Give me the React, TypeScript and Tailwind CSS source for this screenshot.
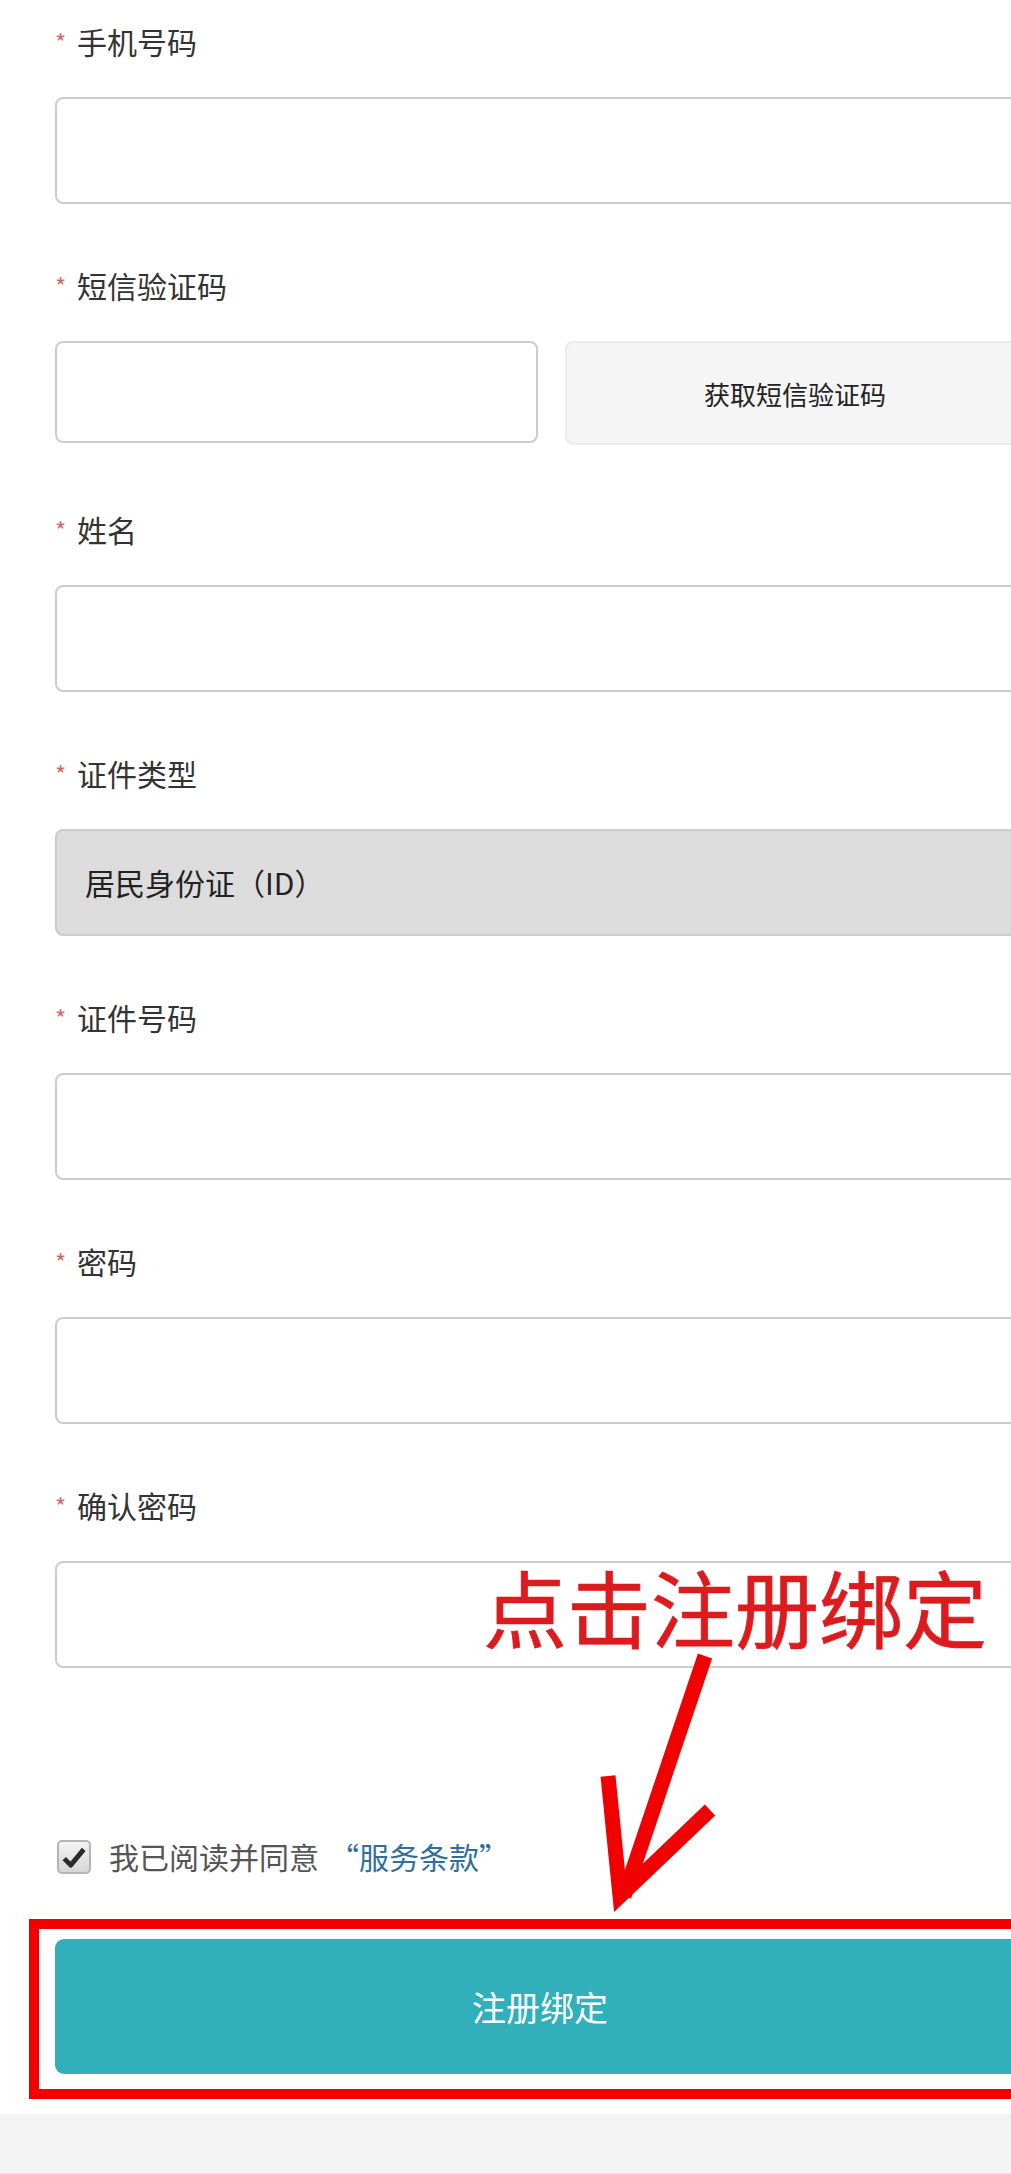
const fields = [
  { label: '手机号码', kind: 'input' },
  { label: '短信验证码', kind: 'sms' },
  { label: '姓名', kind: 'input' },
  { label: '证件类型', kind: 'select' },
  { label: '证件号码', kind: 'input' },
  { label: '密码', kind: 'input' },
  { label: '确认密码', kind: 'input' },
];

function Field({ label, kind }: { label: string; kind: string }) {
  return (
    <div className="mb-[59px] last:mb-0">
      <div className="flex h-[45px] items-center text-[30px] leading-[45px] text-[#333]">
        <span className="w-[22px] text-[24px] text-[#d06a6a]">*</span>
        <span>{label}</span>
      </div>
      {kind === 'input' && (
        <div className="mt-[33px] h-[107px] w-full rounded-[8px] border-2 border-[#cccccc] bg-white" />
      )}
      {kind === 'sms' && (
        <div className="mt-[33px] flex h-[107px] items-start gap-[27px]">
          <div className="h-[102px] w-[483px] rounded-[8px] border-2 border-[#cccccc] bg-white" />
          <div className="flex h-[104px] flex-1 items-center justify-center rounded-[8px] border-2 border-[#ececec] bg-[#f5f5f5] text-[26px] text-[#222]">
            获取短信验证码
          </div>
        </div>
      )}
      {kind === 'select' && (
        <div className="mt-[33px] flex h-[107px] w-full items-center rounded-[8px] border-2 border-[#cccccc] bg-[#dcdcdc] pl-[28px] text-[30px] text-[#222]">
          居民身份证（ID）
        </div>
      )}
    </div>
  );
}

export default function App() {
  return (
    <div className="relative min-h-[2174px] w-[1011px] overflow-hidden bg-white font-['Noto_Sans_CJK_SC',sans-serif]">
      <div className="ml-[55px] w-[970px] pt-[19px]">
        {fields.map((f) => (
          <Field key={f.label} label={f.label} kind={f.kind} />
        ))}

        <div className="mt-[166px] flex h-[45px] items-center text-[30px]">
          <span className="ml-[2px] flex h-[34px] w-[34px] items-center justify-center rounded-[5px] border-2 border-[#b5b5b5] bg-gradient-to-b from-[#f4f4f4] to-[#d6d6d6]">
            <svg viewBox="0 0 24 24" className="h-[26px] w-[26px]">
              <path d="M3 13.5 L9 19.5 L21 5" fill="none" stroke="#2b2b2b" strokeWidth="4.5" strokeLinejoin="round" />
            </svg>
          </span>
          <span className="ml-[18px] text-[#555]">我已阅读并同意</span>
          <span className="ml-[10px] text-[#2f6e9f]">“服务条款”</span>
        </div>

        <div className="relative mt-[60px]">
          <span className="absolute -top-[20px] -bottom-[25px] -left-[26px] -right-[26px] border-[10px] border-[#f20000]" />
          <div className="relative flex h-[135px] items-center justify-center rounded-[9px] bg-[#31afbb] text-[34px] text-white">
            注册绑定
          </div>
        </div>
      </div>

      <div className="mt-[40px] h-[61px] border-b-2 border-[#e6e6e6] bg-[#f4f4f4]" />

      {/* annotation */}
      <div className="absolute left-[483px] top-[1564px] text-[84px] font-normal leading-none text-[#dc1b1f] [-webkit-text-stroke:0.7px_#dc1b1f]">
        点击注册绑定
      </div>
      <svg className="pointer-events-none absolute left-0 top-0" width="1011" height="2174">
        <line x1="705" y1="1656" x2="624" y2="1896" stroke="#f00000" strokeWidth="15" />
        <polyline
          points="608,1776 620,1896 710,1810"
          fill="none"
          stroke="#f00000"
          strokeWidth="15"
          strokeLinejoin="miter"
          strokeMiterlimit="10"
        />
      </svg>
    </div>
  );
}
